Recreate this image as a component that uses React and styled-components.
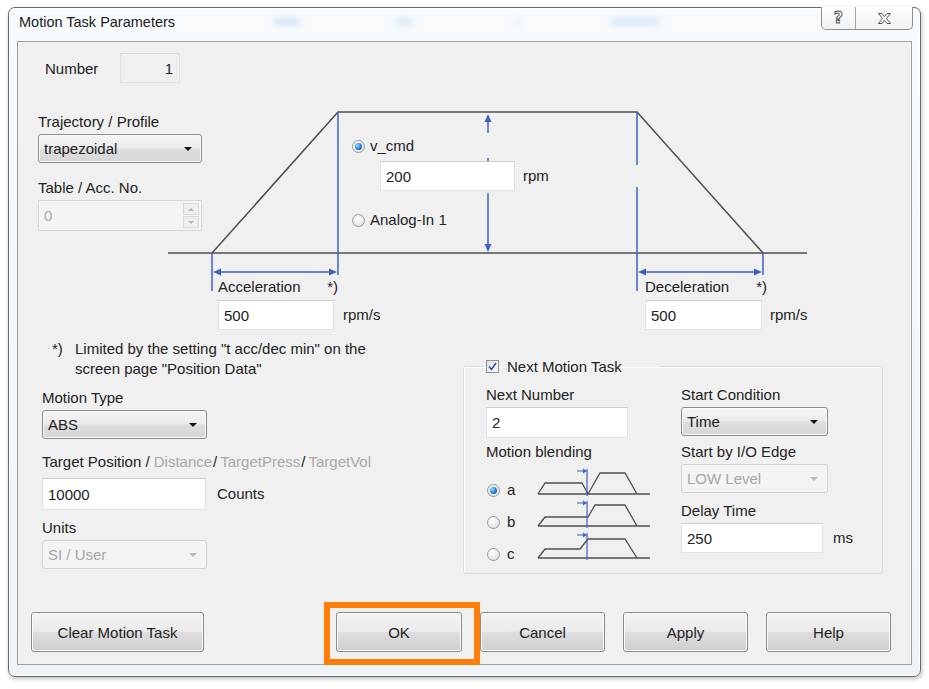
import React from "react";
import styled, { createGlobalStyle } from "styled-components";

const GlobalStyle = createGlobalStyle`
  html, body {
    margin: 0;
    padding: 0;
    background: #fff;
  }
  body {
    font-family: "Liberation Sans", Arial, sans-serif;
    font-size: 15px;
    color: #222;
  }
  * {
    box-sizing: border-box;
  }
`;

const Page = styled.div`
  width: 929px;
  height: 689px;
  padding: 7px 8px;
`;

const Window = styled.div`
  width: 913px;
  height: 670px;
  border: 1px solid #6b6b6b;
  border-radius: 7px;
  background: linear-gradient(#f8fbfd, #eef3f7);
  box-shadow: 1px 2px 4px rgba(0, 0, 0, 0.25), inset 0 0 0 1px #ffffff;
  display: flex;
  flex-direction: column;
`;

const TitleBar = styled.div`
  position: relative;
  height: 33px;
  display: flex;
  align-items: flex-start;
  justify-content: space-between;
  padding: 0 7px 0 10px;
`;

const Title = styled.div`
  padding-top: 5px;
  line-height: 18px;
  font-size: 14.5px;
  color: #1a1a1a;
`;

// blurred shapes of whatever sits behind the glass frame
const Haze = styled.span`
  position: absolute;
  top: 10px;
  left: ${(p) => p.$x}px;
  width: ${(p) => p.$w}px;
  height: 8px;
  background: #b4d0ea;
  opacity: ${(p) => p.$o || 0.5};
  filter: blur(3px);
`;

const CaptionGroup = styled.div`
  display: flex;
  margin-top: -1px;
  height: 23px;
  border: 1px solid #8f8f8f;
  border-top: none;
  border-radius: 0 0 5px 5px;
  background: linear-gradient(#fdfdfd, #eef2f5);
  overflow: hidden;
`;

const CaptionButton = styled.div`
  width: ${(p) => p.$w}px;
  display: flex;
  align-items: center;
  justify-content: center;
  & + & {
    border-left: 1px solid #a5a5a5;
  }
`;

const HelpGlyph = styled.span`
  font-family: "DejaVu Sans", sans-serif;
  font-weight: bold;
  font-size: 16px;
  color: #fff;
  -webkit-text-stroke: 1px #555;
  margin-top: -2px;
`;

const Client = styled.div`
  flex: 1;
  margin: 0 8px 11px 8px;
  border: 1px solid #a0a0a0;
  background: #f0f0f0;
  display: flex;
  flex-direction: column;
`;

const TopSection = styled.div`
  position: relative;
  height: 294px;
`;

const LeftColumn = styled.div`
  position: relative;
  z-index: 1;
  width: 190px;
  padding: 11px 0 0 20px;
  display: flex;
  flex-direction: column;
  align-items: flex-start;
`;

const NumberRow = styled.div`
  display: flex;
  align-items: center;
  margin-left: 7px;
`;

const NumberLabel = styled.span`
  width: 75px;
`;

const Label = styled.div`
  height: 18px;
  line-height: 18px;
  white-space: nowrap;
  margin-top: ${(p) => p.$top || 0}px;
  color: ${(p) => (p.$disabled ? "#a6a6a6" : "#222")};
`;

const Dim = styled.span`
  color: #a9a9a9;
`;

const Slash = styled.span`
  margin: 0 3px 0 1px;
`;

const TextBox = styled.div`
  width: ${(p) => p.$w}px;
  height: ${(p) => p.$h || 30}px;
  margin-top: ${(p) => p.$top || 0}px;
  background: ${(p) => (p.$readOnly ? "#f0f0f0" : "#fff")};
  border: 1px solid ${(p) => (p.$readOnly ? "#e1e1e1" : "#e2e2e2")};
  border-top-color: ${(p) => (p.$readOnly ? "#d6d6d6" : "#cfcfcf")};
  padding: 0 6px 0 5px;
  display: flex;
  align-items: center;
  justify-content: ${(p) => (p.$alignRight ? "flex-end" : "flex-start")};
  color: #222;
`;

const Combo = styled.div`
  width: ${(p) => p.$w}px;
  height: 29px;
  margin-top: ${(p) => p.$top || 0}px;
  border: 1px solid ${(p) => (p.$disabled ? "#d2d2d2" : "#8c8c8c")};
  border-radius: 3px;
  background: ${(p) =>
    p.$disabled
      ? "#f4f4f4"
      : "linear-gradient(#f5f5f5, #ebebeb 48%, #dedede 52%, #d6d6d6)"};
  box-shadow: ${(p) => (p.$disabled ? "none" : "inset 0 0 0 1px #fafafa")};
  color: ${(p) => (p.$disabled ? "#a6a6a6" : "#222")};
  padding: 0 9px 0 5px;
  display: flex;
  align-items: center;
  justify-content: space-between;
  &::after {
    content: "";
    border-left: 4px solid transparent;
    border-right: 4px solid transparent;
    border-top: 4px solid ${(p) => (p.$disabled ? "#b9b9b9" : "#111")};
  }
`;

const SpinBox = styled.div`
  width: 164px;
  height: 31px;
  margin-top: 3px;
  display: flex;
  border: 1px solid #d6d6d6;
  background: #f4f4f4;
  color: #a9a9a9;
`;

const SpinValue = styled.div`
  flex: 1;
  padding-left: 5px;
  display: flex;
  align-items: center;
`;

const SpinButtons = styled.div`
  width: 18px;
  padding: 2px 2px 2px 0;
  display: flex;
  flex-direction: column;
  gap: 1px;
`;

const SpinButton = styled.div`
  flex: 1;
  border: 1px solid #dadada;
  background: #efefef;
  display: flex;
  align-items: center;
  justify-content: center;
  &::after {
    content: "";
    border-left: 3px solid transparent;
    border-right: 3px solid transparent;
    ${(p) =>
      p.$down ? "border-top: 3px solid #b4b4b4;" : "border-bottom: 3px solid #b4b4b4;"}
  }
`;

/* trapezoid profile with its fields */
const Diagram = styled.div`
  position: absolute;
  inset: 0;
`;

const DiagramLines = styled.svg`
  position: absolute;
  left: 0;
  top: 0;
`;

const DiagramSpot = styled.div`
  position: absolute;
  left: ${(p) => p.$x}px;
  top: ${(p) => p.$y}px;
  display: flex;
  flex-direction: column;
`;

const Row = styled.div`
  display: flex;
  align-items: center;
  gap: ${(p) => p.$gap || 0}px;
  margin-top: ${(p) => p.$top || 0}px;
  margin-left: ${(p) => p.$indent || 0}px;
`;

const RateHead = styled.div`
  display: flex;
  justify-content: space-between;
  width: ${(p) => p.$w}px;
  height: 18px;
  line-height: 18px;
`;

const Radio = styled.span`
  flex: none;
  width: 13px;
  height: 13px;
  margin-left: ${(p) => p.$shift || 0}px;
  border-radius: 50%;
  border: 1px solid #9a9a9a;
  background: radial-gradient(circle at 40% 35%, #ffffff, #d9d9d9);
  display: inline-flex;
  align-items: center;
  justify-content: center;
  &::after {
    content: "";
    display: ${(p) => (p.$checked ? "block" : "none")};
    width: 7px;
    height: 7px;
    border-radius: 50%;
    background: radial-gradient(circle at 35% 35%, #9bdcff, #1f7fd6 55%, #0c4b91);
  }
`;

const RadioText = styled.span`
  line-height: 18px;
`;

/* lower half */
const LowerSection = styled.div`
  display: flex;
  align-items: flex-start;
`;

const LowerLeft = styled.div`
  width: 445px;
  padding: 3px 0 0 24px;
  display: flex;
  flex-direction: column;
  align-items: flex-start;
`;

const Footnote = styled.div`
  display: flex;
  line-height: 20px;
  margin-left: 10px;
`;

const FootMark = styled.span`
  width: 23px;
  flex: none;
`;

const Unit = styled.span`
  line-height: 18px;
`;

const GroupBox = styled.fieldset`
  margin: 21px 0 0 0;
  padding: 0;
  width: 420px;
  height: 217px;
  border: 1px solid #d5dfe5;
  border-radius: 3px;
  box-shadow: inset 1px 1px 0 #fff;
  min-width: 0;
`;

const Legend = styled.legend`
  margin-left: 20px;
  padding: 0 0 0 2px;
  width: 176px;
  height: 18px;
`;

const LegendInner = styled.span`
  display: inline-flex;
  align-items: center;
  gap: 8px;
  height: 18px;
  line-height: 18px;
`;

const CheckBox = styled.span`
  width: 13px;
  height: 13px;
  border: 1px solid #8e8f8f;
  background: linear-gradient(135deg, #dcdcdc, #ffffff);
  display: inline-flex;
  align-items: center;
  justify-content: center;
`;

const GroupGrid = styled.div`
  display: grid;
  grid-template-columns: 195px 1fr;
  padding: 11px 0 0 22px;
`;

const GroupColumn = styled.div`
  display: flex;
  flex-direction: column;
  align-items: flex-start;
`;

const BlendRows = styled.div`
  margin-top: 13px;
  display: flex;
  flex-direction: column;
`;

const BlendRow = styled.div`
  height: 32px;
  display: flex;
  align-items: center;
`;

const BlendLetter = styled.span`
  width: 31px;
  margin-left: 7px;
  line-height: 18px;
`;

const BlendSvg = styled.svg`
  overflow: visible;
`;

/* buttons */
const ButtonRow = styled.div`
  margin-top: auto;
  padding: 0 20px 12px 13px;
  display: flex;
  align-items: center;
`;

const ButtonGroup = styled.div`
  margin-left: auto;
  display: flex;
  gap: 18px;
`;

const Button = styled.button`
  width: ${(p) => p.$w}px;
  height: 40px;
  border: 1px solid #8a8a8a;
  border-radius: 3px;
  background: linear-gradient(#f3f3f3, #ebebeb 48%, #dddddd 52%, #cfcfcf);
  box-shadow: inset 0 0 0 1px #fbfbfb;
  font: inherit;
  color: #222;
  padding: 0;
`;

const Marked = styled.div`
  position: relative;
`;

const Highlight = styled.div`
  position: absolute;
  left: -12px;
  top: -10px;
  width: 156px;
  height: 63px;
  border: 6px solid #ff7d0a;
  pointer-events: none;
`;

const BLUE = "#3f62c2";
const INK = "#4f4f4f";

function ProfileDrawing() {
  return (
    <DiagramLines width="896" height="294" viewBox="0 0 896 294">
      <line x1="150" y1="211" x2="789" y2="211" stroke={INK} strokeWidth="1.5" />
      <polyline points="194,211 320,70 619,70 745,211" fill="none" stroke={INK} strokeWidth="1.5" />
      <g stroke={BLUE} strokeWidth="1.5" fill="none">
        <path d="M194 211 V249 M320 70 V233 M619 70 V123 M619 145 V249 M745 211 V233" />
        <path d="M200 230 H314 M625 230 H739" />
        <path d="M470 78 V91 M470 116 V120 M470 151 V204" />
      </g>
      <g fill={BLUE}>
        <polygon points="195,230 203,226.5 203,233.5" />
        <polygon points="319,230 311,226.5 311,233.5" />
        <polygon points="620,230 628,226.5 628,233.5" />
        <polygon points="744,230 736,226.5 736,233.5" />
        <polygon points="470,72 466.5,80 473.5,80" />
        <polygon points="470,210 466.5,202 473.5,202" />
      </g>
    </DiagramLines>
  );
}

// baseline sits at y=20; the profiles and the marker rise above the box
const blendProfiles = {
  a: "M0 20 L7 9 L44 9 L50 20 L62 -1 L87 -1 L99 20",
  b: "M0 20 L7 11 L50 11 L57 -1 L87 -1 L99 20",
  c: "M0 20 L7 11 L42 11 L50 1 L87 1 L99 20",
};

function BlendIcon({ kind }) {
  return (
    <BlendSvg width="112" height="32" viewBox="0 0 112 32">
      <path d="M0 20 H112" stroke={INK} strokeWidth="1.3" />
      <path d={blendProfiles[kind]} fill="none" stroke={INK} strokeWidth="1.3" />
      <path d="M49 -5 V22 M39 -3 H46" stroke={BLUE} strokeWidth="1.2" fill="none" />
      <polygon points="49,-3 45,-5.5 45,-0.5" fill={BLUE} />
    </BlendSvg>
  );
}

function CloseGlyph() {
  return (
    <svg width="15" height="13" viewBox="0 0 15 13">
      <polygon
        points="1.5,1.5 5,1.5 7.5,4.6 10,1.5 13.5,1.5 9.4,6.5 13.5,11.5 10,11.5 7.5,8.4 5,11.5 1.5,11.5 5.6,6.5"
        fill="#fff"
        stroke="#555"
        strokeWidth="1"
        strokeLinejoin="round"
      />
    </svg>
  );
}

function CheckMark() {
  return (
    <svg width="9" height="9" viewBox="0 0 9 9">
      <path d="M1 4.5 L3.5 7.5 L8 1" fill="none" stroke="#2a55b5" strokeWidth="1.6" />
    </svg>
  );
}

export default function App() {
  return (
    <>
      <GlobalStyle />
      <Page>
        <Window>
          <TitleBar>
            <Title>Motion Task Parameters</Title>
            <Haze $x={265} $w={26} />
            <Haze $x={386} $w={18} $o={0.4} />
            <Haze $x={506} $w={6} $o={0.3} />
            <Haze $x={602} $w={48} $o={0.45} />
            <CaptionGroup>
              <CaptionButton $w={33}>
                <HelpGlyph>?</HelpGlyph>
              </CaptionButton>
              <CaptionButton $w={57}>
                <CloseGlyph />
              </CaptionButton>
            </CaptionGroup>
          </TitleBar>

          <Client>
            <TopSection>
              <Diagram>
                <ProfileDrawing />

                <DiagramSpot $x={334} $y={95}>
                  <Row $gap={5}>
                    <Radio $checked />
                    <RadioText>v_cmd</RadioText>
                  </Row>
                  <Row $gap={8} $top={6} $indent={28}>
                    <TextBox $w={135}>200</TextBox>
                    <Unit>rpm</Unit>
                  </Row>
                  <Row $gap={5} $top={20}>
                    <Radio />
                    <RadioText>Analog-In 1</RadioText>
                  </Row>
                </DiagramSpot>

                <DiagramSpot $x={200} $y={236}>
                  <RateHead $w={120}>
                    <span>Acceleration</span>
                    <span>*)</span>
                  </RateHead>
                  <Row $gap={9} $top={4}>
                    <TextBox $w={116}>500</TextBox>
                    <Unit>rpm/s</Unit>
                  </Row>
                </DiagramSpot>

                <DiagramSpot $x={627} $y={236}>
                  <RateHead $w={122}>
                    <span>Deceleration</span>
                    <span>*)</span>
                  </RateHead>
                  <Row $gap={8} $top={4}>
                    <TextBox $w={117}>500</TextBox>
                    <Unit>rpm/s</Unit>
                  </Row>
                </DiagramSpot>
              </Diagram>

              <LeftColumn>
                <NumberRow>
                  <NumberLabel>Number</NumberLabel>
                  <TextBox $w={60} $readOnly $alignRight>
                    1
                  </TextBox>
                </NumberRow>
                <Label $top={30}>Trajectory / Profile</Label>
                <Combo $w={164} $top={3}>trapezoidal</Combo>
                <Label $top={16}>Table / Acc. No.</Label>
                <SpinBox>
                  <SpinValue>0</SpinValue>
                  <SpinButtons>
                    <SpinButton />
                    <SpinButton $down />
                  </SpinButtons>
                </SpinBox>
              </LeftColumn>
            </TopSection>

            <LowerSection>
              <LowerLeft>
                <Footnote>
                  <FootMark>*)</FootMark>
                  <span>
                    Limited by the setting "t acc/dec min" on the
                    <br />
                    screen page "Position Data"
                  </span>
                </Footnote>
                <Label $top={10}>Motion Type</Label>
                <Combo $w={165} $top={3}>ABS</Combo>
                <Label $top={14}>
                  Target Position / <Dim>Distance</Dim>
                  <Slash>/</Slash>
                  <Dim>TargetPress</Dim>
                  <Slash>/</Slash>
                  <Dim>TargetVol</Dim>
                </Label>
                <Row $gap={11} $top={7}>
                  <TextBox $w={164} $h={32}>10000</TextBox>
                  <Unit>Counts</Unit>
                </Row>
                <Label $top={9}>Units</Label>
                <Combo $w={165} $top={3} $disabled>SI / User</Combo>
              </LowerLeft>

              <GroupBox>
                <Legend>
                  <LegendInner>
                    <CheckBox>
                      <CheckMark />
                    </CheckBox>
                    Next Motion Task
                  </LegendInner>
                </Legend>
                <GroupGrid>
                  <GroupColumn>
                    <Label>Next Number</Label>
                    <TextBox $w={142} $h={31} $top={3}>2</TextBox>
                    <Label $top={5}>Motion blending</Label>
                    <BlendRows>
                      {["a", "b", "c"].map((kind) => (
                        <BlendRow key={kind}>
                          <Radio $checked={kind === "a"} $shift={1} />
                          <BlendLetter>{kind}</BlendLetter>
                          <BlendIcon kind={kind} />
                        </BlendRow>
                      ))}
                    </BlendRows>
                  </GroupColumn>
                  <GroupColumn>
                    <Label>Start Condition</Label>
                    <Combo $w={147} $top={3}>Time</Combo>
                    <Label $top={7}>Start by I/O Edge</Label>
                    <Combo $w={147} $top={3} $disabled>LOW Level</Combo>
                    <Label $top={9}>Delay Time</Label>
                    <Row $gap={10} $top={3}>
                      <TextBox $w={142}>250</TextBox>
                      <Unit>ms</Unit>
                    </Row>
                  </GroupColumn>
                </GroupGrid>
              </GroupBox>
            </LowerSection>

            <ButtonRow>
              <Button $w={173}>Clear Motion Task</Button>
              <ButtonGroup>
                <Marked>
                  <Button $w={126}>OK</Button>
                  <Highlight />
                </Marked>
                <Button $w={125}>Cancel</Button>
                <Button $w={125}>Apply</Button>
                <Button $w={125}>Help</Button>
              </ButtonGroup>
            </ButtonRow>
          </Client>
        </Window>
      </Page>
    </>
  );
}
